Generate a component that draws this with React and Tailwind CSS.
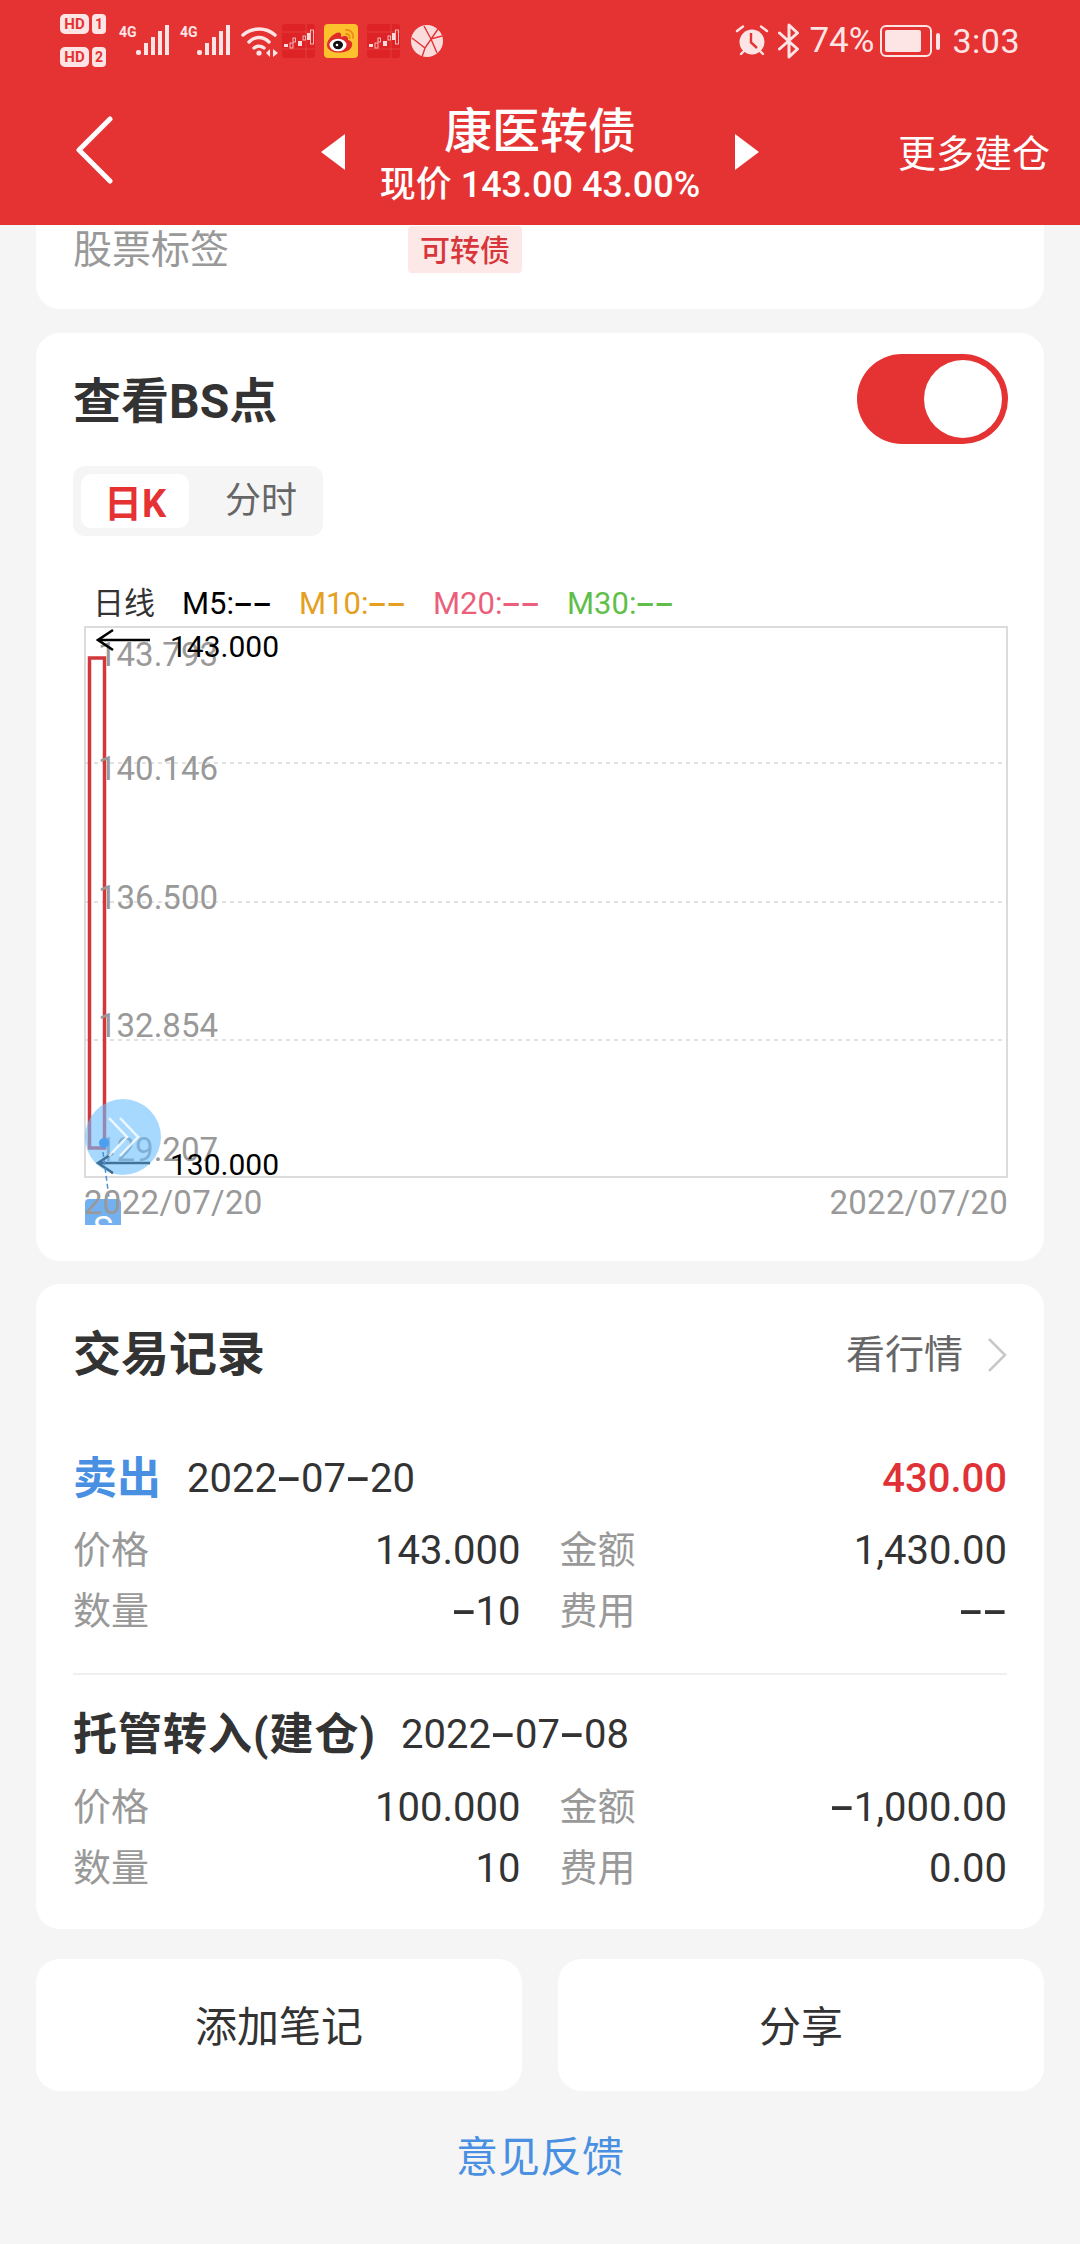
function HD({ n }) {
  return (
    <div className="flex items-center gap-[3px] h-[20px]">
      <span className="h-[20px] w-[29px] rounded-[5px] bg-[#fde5e5] text-[#e53233] text-[15px] leading-[20px] font-bold text-center">HD</span>
      <span className="h-[20px] w-[14px] rounded-[4px] bg-[#fde5e5] text-[#e53233] text-[14px] leading-[20px] font-bold text-center">{n}</span>
    </div>
  );
}

function Signal() {
  return (
    <div className="relative w-[50px] h-[34px]">
      <span className="absolute left-0 top-[0px] text-[14px] leading-[16px] font-bold text-[#fde5e5]">4G</span>
      <svg className="absolute left-0 top-0" width="50" height="34" viewBox="0 0 50 34" fill="#fde5e5">
        <rect x="17" y="26" width="5" height="5" rx="2" />
        <rect x="25" y="19" width="4" height="12" />
        <rect x="32" y="13" width="4" height="18" />
        <rect x="39" y="7" width="4" height="24" />
        <rect x="46" y="1" width="4" height="30" />
      </svg>
    </div>
  );
}

function Wifi() {
  return (
    <svg width="38" height="34" viewBox="0 0 38 34" fill="none" stroke="#fde5e5" strokeWidth="3.4" strokeLinecap="round">
      <path d="M2 11C11 3 25 3 34 11" />
      <path d="M8 18C14 12 22 12 28 18" />
      <path d="M13 24C16 21.5 20 21.5 23 24" />
      <circle cx="18" cy="29" r="2.6" fill="#fde5e5" stroke="none" />
      <path d="M29 25L25 29L29 33Z" fill="#fde5e5" stroke="none" />
      <path d="M32 25L37 29L32 33Z" fill="#fde5e5" stroke="none" />
    </svg>
  );
}

function StockIcon() {
  return (
    <svg width="33" height="34" viewBox="0 0 33 34">
      <rect width="33" height="34" rx="3" fill="#dd2326" />
      <path d="M0 8H33M24 0V34M0 25H33" stroke="#ee5a5a" strokeWidth="0.5" />
      <g fill="#fbdcdc">
        <rect x="2" y="20" width="4" height="3" />
        <rect x="8" y="19" width="3" height="5" fill="none" stroke="#fbdcdc" strokeWidth="0.8" />
        <rect x="16" y="17" width="4" height="5" />
        <rect x="11" y="14" width="2.5" height="4" fill="none" stroke="#fbdcdc" strokeWidth="0.8" />
        <rect x="21" y="12" width="2.5" height="4" fill="none" stroke="#fbdcdc" strokeWidth="0.8" />
        <rect x="25" y="9" width="3" height="7" />
      </g>
      <rect x="28.5" y="6" width="3" height="14" fill="none" stroke="#fbdcdc" strokeWidth="0.8" />
    </svg>
  );
}

function Weibo() {
  return (
    <svg width="34" height="34" viewBox="0 0 34 34">
      <rect width="34" height="34" rx="4" fill="#fdc12e" />
      <path d="M3 21C3 15 11 8 15 8.5C18 9 17 12.5 17 13C21 11 25 12 24 16C29 17 29 21 27 24C24 28 18 29 13 28.5C7 28 3 25 3 21Z" fill="#e02b2b" />
      <ellipse cx="14" cy="21" rx="8.5" ry="6.3" fill="#fff" />
      <ellipse cx="14" cy="21" rx="5" ry="4.2" fill="#111" />
      <circle cx="13" cy="21" r="1.3" fill="#fff" />
      <path d="M22 6C26 5.5 30 9 29 14M22 10C24.5 9.8 26 11.5 25.7 14" fill="none" stroke="#f08a1a" strokeWidth="1.8" strokeLinecap="round" />
    </svg>
  );
}

function Globe() {
  return (
    <svg width="32" height="34" viewBox="0 0 32 34">
      <circle cx="16" cy="17" r="16" fill="#fbdcdc" />
      <path d="M1 14L14 24L27 5M14 24L11 33M13 2L20 15L31 12M20 15L26 29" fill="none" stroke="#e53233" strokeWidth="1.4" />
    </svg>
  );
}

function Alarm() {
  return (
    <svg width="34" height="34" viewBox="0 0 34 34">
      <circle cx="17" cy="18" r="12.5" fill="#fde5e5" />
      <path d="M16 9V18.5L22 24" fill="none" stroke="#e53233" strokeWidth="2.4" />
      <path d="M2 7L8 2.5M32 7L26 2.5M6 30L9 27M28 30L25 27" stroke="#fde5e5" strokeWidth="2.4" strokeLinecap="round" />
    </svg>
  );
}

function Bluetooth() {
  return (
    <svg width="22" height="36" viewBox="0 0 22 36" fill="none" stroke="#fde5e5" strokeWidth="3" strokeLinejoin="round" strokeLinecap="round">
      <path d="M1.5 10L19.5 26L11 34V2L19.5 10L1.5 26" />
    </svg>
  );
}

function Battery() {
  return (
    <div className="flex items-center gap-[4px]">
      <div className="w-[52px] h-[32px] rounded-[6px] border-[2px] border-[#fde5e5] p-[3px]">
        <div className="h-full w-[36px] rounded-[2px] bg-[#fde5e5]" />
      </div>
      <div className="w-[4px] h-[17px] rounded-[2px] bg-[#fde5e5]" />
    </div>
  );
}

function StatusBar() {
  return (
    <div className="h-[70px] flex items-start pl-[60px] pr-[60px] text-[#fde5e5]">
      <div className="flex flex-col gap-[13px] pt-[14px] w-[59px]">
        <HD n="1" />
        <HD n="2" />
      </div>
      <div className="flex items-center gap-[11px] pt-[24px]">
        <Signal />
        <Signal />
        <Wifi />
        <div className="ml-[-8px]"><StockIcon /></div>
        <div className="ml-[-2px]"><Weibo /></div>
        <div className="ml-[-2px]"><StockIcon /></div>
        <Globe />
      </div>
      <div className="ml-auto flex items-center pt-[23px]">
        <Alarm />
        <div className="ml-[9px]"><Bluetooth /></div>
        <span className="ml-[9px] text-[35px] leading-[36px]">74%</span>
        <div className="ml-[6px]"><Battery /></div>
        <span className="ml-[12px] text-[34px] leading-[36px] tracking-[0.5px]">3:03</span>
      </div>
    </div>
  );
}

function Header() {
  return (
    <div className="h-[225px] bg-[#e53233]">
      <StatusBar />
      <div className="flex items-start text-white">
        <div className="w-[321px] pl-[75px] pt-[46px]">
          <svg width="38" height="68" viewBox="0 0 38 68" fill="none" stroke="#fff" strokeWidth="5" strokeLinecap="round" strokeLinejoin="round">
            <path d="M35 3L4 34L35 65" />
          </svg>
        </div>
        <div className="pt-[64px]">
          <svg width="24" height="36" viewBox="0 0 24 36"><path d="M24 0V36L0 18Z" fill="#fff" /></svg>
        </div>
        <div className="w-[390px] text-center pt-[34px]">
          <div className="text-[48px] leading-[56px] font-medium">康医转债</div>
          <div className="mt-[3px] text-[36px] leading-[44px] font-medium whitespace-nowrap">现价 143.00 43.00%</div>
        </div>
        <div className="pt-[64px]">
          <svg width="24" height="36" viewBox="0 0 24 36"><path d="M0 0V36L24 18Z" fill="#fff" /></svg>
        </div>
        <div className="ml-auto mr-[30px] pt-[60px] text-[38px] leading-[48px]">更多建仓</div>
      </div>
    </div>
  );
}

function Toggle() {
  return (
    <div className="w-[151px] h-[90px] rounded-full bg-[#e53233] flex items-center justify-end pr-[6px]">
      <div className="w-[78px] h-[78px] rounded-full bg-white" />
    </div>
  );
}

function Candle() {
  return (
    <svg className="absolute inset-0" width="922" height="549" viewBox="0 0 922 549" fill="none">
      <path d="M0 135H922M0 274H922M0 412H922" stroke="#d8d8d8" strokeWidth="1.5" strokeDasharray="4 4" />
      <rect x="3.5" y="30" width="15" height="490" stroke="#d2373d" strokeWidth="3.5" />
    </svg>
  );
}

function Arrow({ className }) {
  return (
    <svg className={className} width="54" height="24" viewBox="0 0 54 24" fill="none" stroke="#000" strokeWidth="2.6">
      <path d="M54 12H2M17 2L2 12L17 22" />
    </svg>
  );
}

function Num({ text }) {
  return (
    <span>
      {text.split("").map((c, i) =>
        c === "-" ? (
          <span key={i} className="inline-block w-[0.6em] text-center font-medium scale-x-[1.9]">-</span>
        ) : (
          c
        )
      )}
    </span>
  );
}

function Chart() {
  const axis = "absolute left-[12px] text-[33px] leading-[40px] text-[#999]";
  const price = "absolute left-[84px] text-[30px] leading-[36px] text-black";
  return (
    <div className="relative h-[552px] border-[2px] border-[#dcdcdc] overflow-visible">
      <Candle />
      <span className={axis + " top-[7px]"}>143.793</span>
      <span className={axis + " top-[121px]"}>140.146</span>
      <span className={axis + " top-[250px]"}>136.500</span>
      <span className={axis + " top-[378px]"}>132.854</span>
      <span className={axis + " top-[502px]"}>129.207</span>
      <Arrow className="absolute left-[10px] top-[0px]" />
      <span className={price + " top-[1px]"}>143.000</span>
      <Arrow className="absolute left-[10px] top-[523px]" />
      <span className={price + " top-[519px]"}>130.000</span>
      <div className="absolute left-[-1px] top-[471px] w-[76px] h-[76px] rounded-full bg-[#6cc0ff]/60 flex items-center justify-center">
        <svg width="36" height="44" viewBox="0 0 36 44" fill="none" stroke="#fff" strokeOpacity="0.8" strokeWidth="2.5">
          <path d="M4 3L22 22L4 41M15 3L33 22L15 41" />
        </svg>
      </div>
      <div className="absolute left-[13px] top-[510px] w-[10px] h-[10px] rounded-full bg-[#4c9ef0]" />
      <svg className="absolute left-[15px] top-[522px]" width="10" height="50" viewBox="0 0 10 50" fill="none" stroke="#4a8fd8" strokeWidth="1.5" strokeDasharray="5 3">
        <path d="M2 2L8 48" />
      </svg>
      <div className="absolute left-[-1px] top-[571px] w-[36px] h-[26px] overflow-hidden rounded-t-[4px] bg-[#73b0f0] text-white text-[34px] leading-[58px] text-center">S</div>
    </div>
  );
}

function Row({ l1, v1, l2, v2 }) {
  return (
    <div className="grid grid-cols-2 gap-x-[39px] h-[61px] items-center">
      <div className="flex justify-between items-center">
        <span className="text-[38px] text-[#999]">{l1}</span>
        <span className="text-[40px] text-[#333]"><Num text={v1} /></span>
      </div>
      <div className="flex justify-between items-center">
        <span className="text-[38px] text-[#999]">{l2}</span>
        <span className="text-[40px] text-[#333]"><Num text={v2} /></span>
      </div>
    </div>
  );
}

export default function App() {
  return (
    <div className="w-[1080px] h-[2244px] overflow-hidden bg-[#f5f5f5] font-[Roboto,'Noto_Sans_CJK_SC',sans-serif]">
      <Header />
      <div className="px-[36px] flex flex-col">
        <div className="h-[84px] rounded-b-[24px] bg-white px-[37px] flex items-start">
          <span className="w-[335px] text-[39px] leading-[48px] text-[#999] mt-[1px]">股票标签</span>
          <span className="h-[47px] w-[114px] mt-[1px] rounded-[4px] bg-[#fde8e8] text-center text-[30px] leading-[50px] font-medium text-[#d9363a]">可转债</span>
        </div>

        <div className="mt-[24px] h-[928px] rounded-[24px] bg-white pl-[37px] pr-[36px] pt-[21px]">
          <div className="flex justify-between items-center h-[90px]">
            <span className="pt-[5px] text-[48px] leading-[56px] font-bold text-[#333]">查看BS点</span>
            <Toggle />
          </div>
          <div className="mt-[22px] w-[250px] h-[70px] rounded-[12px] bg-[#f5f5f5] flex items-center px-[8px]">
            <span className="w-[108px] h-[54px] rounded-[10px] bg-white text-center text-[38px] leading-[60px] font-bold text-[#e53233]">日K</span>
            <span className="flex-1 pl-[18px] text-center text-[36px] leading-[60px] text-[#666]">分时</span>
          </div>
          <div className="mt-[46px] ml-[20px] h-[44px] flex items-center text-[31px] leading-[44px] whitespace-nowrap">
            <span className="w-[89px] text-[#333]">日线</span>
            <span className="w-[117px] text-black"><Num text="M5:--" /></span>
            <span className="w-[134px] text-[#e5a021]"><Num text="M10:--" /></span>
            <span className="w-[134px] text-[#eb5f7c]"><Num text="M20:--" /></span>
            <span className="text-[#5fbf4a]"><Num text="M30:--" /></span>
          </div>
          <div className="ml-[11px]"><Chart /></div>
          <div className="relative mt-[5px] ml-[11px] flex justify-between text-[33px] tracking-[0.3px] leading-[40px] text-[#999]">
            <span>2022/07/20</span>
            <span>2022/07/20</span>
          </div>
        </div>

        <div className="mt-[23px] h-[645px] rounded-[24px] bg-white px-[37px]">
          <div className="flex justify-between items-center pt-[42px] h-[100px]">
            <span className="text-[48px] leading-[58px] font-bold text-[#333]">交易记录</span>
            <div className="flex items-center gap-[24px]">
              <span className="text-[39px] text-[#666]">看行情</span>
              <svg width="20" height="36" viewBox="0 0 20 36" fill="none" stroke="#c8c8c8" strokeWidth="2.5">
                <path d="M2 2L18 18L2 34" />
              </svg>
            </div>
          </div>
          <div className="mt-[70px] flex items-center h-[50px]">
            <span className="w-[114px] text-[44px] font-bold text-[#4a90e2]">卖出</span>
            <span className="text-[40px] text-[#333]"><Num text="2022-07-20" /></span>
            <span className="ml-auto text-[40px] font-medium text-[#e03236]">430.00</span>
          </div>
          <div className="mt-[16px]">
            <Row l1="价格" v1="143.000" l2="金额" v2="1,430.00" />
            <Row l1="数量" v1="-10" l2="费用" v2="--" />
          </div>
          <div className="mt-[31px] h-[2px] bg-[#f0f0f0]" />
          <div className="mt-[35px] flex items-center h-[50px]">
            <span className="w-[328px] text-[44px] tracking-[1px] font-bold text-[#333] whitespace-nowrap">托管转入(建仓)</span>
            <span className="text-[40px] text-[#333]"><Num text="2022-07-08" /></span>
          </div>
          <div className="mt-[17px]">
            <Row l1="价格" v1="100.000" l2="金额" v2="-1,000.00" />
            <Row l1="数量" v1="10" l2="费用" v2="0.00" />
          </div>
        </div>

        <div className="mt-[30px] grid grid-cols-2 gap-x-[36px]">
          <div className="h-[132px] pt-[5px] rounded-[24px] bg-white flex items-center justify-center text-[42px] text-[#333]">添加笔记</div>
          <div className="h-[132px] pt-[5px] rounded-[24px] bg-white flex items-center justify-center text-[42px] text-[#333]">分享</div>
        </div>
        <div className="mt-[40px] text-center text-[42px] leading-[54px] text-[#4a90e2]">意见反馈</div>
      </div>
    </div>
  );
}
